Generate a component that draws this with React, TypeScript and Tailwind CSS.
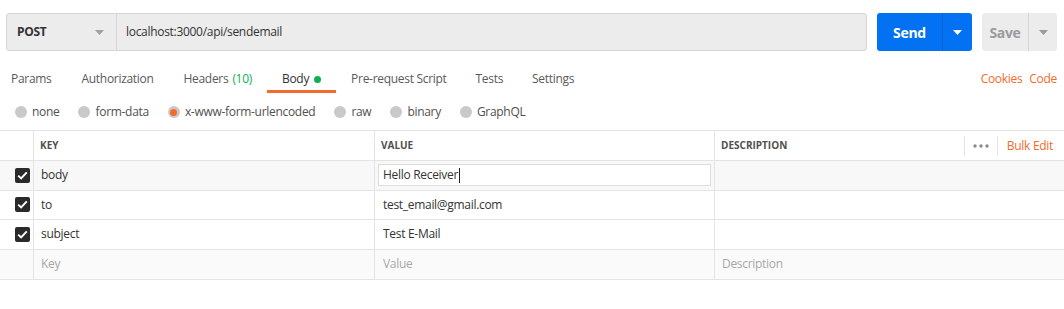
const font = { fontFamily: '"Open Sans", "Liberation Sans", sans-serif' };

const Caret = ({ color }: { color: string }) => (
  <svg width="9" height="5" viewBox="0 0 9 5">
    <path d="M0 0 L9 0 L4.5 5 Z" fill={color} />
  </svg>
);

const Check = () => (
  <div className="flex h-[15px] w-[15px] items-center justify-center rounded-[2px] bg-[#2a2a2a]">
    <svg width="11" height="9" viewBox="0 0 11 9">
      <path d="M1.2 4.6 L4.1 7.4 L9.8 1.4" stroke="white" strokeWidth="2" fill="none" />
    </svg>
  </div>
);

const Radio = ({ label, active }: { label: string; active?: boolean }) => (
  <div className="flex items-center gap-[5px]">
    <div className="flex h-[12px] w-[12px] items-center justify-center rounded-full bg-[#c9c9c9]">
      {active && <div className="h-[7px] w-[7px] rounded-full bg-[#f26b2c]"></div>}
    </div>
    <span className="text-[12px] text-[#505050]">{label}</span>
  </div>
);

const rows = [
  { key: 'body', value: 'Hello Receiver', editing: true },
  { key: 'to', value: 'test_email@gmail.com' },
  { key: 'subject', value: 'Test E-Mail' },
];

const App = () => {
  return (
    <div className="h-[309px] w-[1064px] overflow-hidden bg-white tracking-[-0.3px]" style={font}>
      {/* Barra de petición */}
      <div className="flex items-center gap-[10px] pt-[13px] pr-[7px] pl-[6px]">
        <div className="flex h-[38px] flex-1 rounded-[3px] border border-[#d6d6d6] bg-[#ececec]">
          <div className="flex w-[110px] items-center justify-between border-r border-[#d6d6d6] pr-[12px] pl-[10px]">
            <span className="text-[12px] font-bold text-[#333]">POST</span>
            <Caret color="#a0a0a0" />
          </div>
          <div className="flex items-center pl-[9px] text-[12px] text-[#333]">localhost:3000/api/sendemail</div>
        </div>
        <div className="flex h-[38px] w-[95px] rounded-[3px] bg-[#0271f2]">
          <div className="flex w-[66px] items-center justify-center border-r border-[#0a5fc9] text-[14px] font-bold text-white">
            Send
          </div>
          <div className="flex flex-1 items-center justify-center">
            <Caret color="#ffffff" />
          </div>
        </div>
        <div className="flex h-[38px] w-[75px] rounded-[3px] bg-[#ececec]">
          <div className="flex w-[47px] items-center justify-center border-r border-[#d6d6d6] text-[14px] font-bold text-[#9a9a9a]">
            Save
          </div>
          <div className="flex flex-1 items-center justify-center">
            <Caret color="#9a9a9a" />
          </div>
        </div>
      </div>

      {/* Pestañas */}
      <div className="mt-[14px] flex h-[28px] items-stretch justify-between pr-[7px]">
        <div className="ml-[-4px] flex text-[12px] text-[#5a5a5a]">
          <div className="flex items-center px-[15px]">Params</div>
          <div className="flex items-center px-[15px]">Authorization</div>
          <div className="flex items-center px-[15px]">
            Headers <span className="ml-[4px] text-[#0cb050]">(10)</span>
          </div>
          <div className="flex items-center gap-[5px] border-b-[3px] border-[#f26b2c] px-[15px] pt-[3px] text-[#333]">
            Body <span className="h-[7px] w-[7px] rounded-full bg-[#0cb050]"></span>
          </div>
          <div className="flex items-center px-[15px]">Pre-request Script</div>
          <div className="flex items-center px-[14px]">Tests</div>
          <div className="flex items-center px-[15px]">Settings</div>
        </div>
        <div className="flex items-center gap-[7px] text-[12px] text-[#f26b2c]">
          <span>Cookies</span>
          <span>Code</span>
        </div>
      </div>

      {/* Tipo de cuerpo */}
      <div className="mt-[8px] flex h-[22px] items-center gap-[19px] pl-[15px]">
        <Radio label="none" />
        <Radio label="form-data" />
        <Radio label="x-www-form-urlencoded" active />
        <Radio label="raw" />
        <Radio label="binary" />
        <Radio label="GraphQL" />
      </div>

      {/* Tabla */}
      <div className="mt-[7px] border-t border-[#e4e4e4] text-[12px]">
        <div className="flex h-[30px] border-b border-[#e4e4e4] text-[10px] font-bold tracking-normal text-[#505050]">
          <div className="w-[34px] border-r border-[#e4e4e4]"></div>
          <div className="flex w-[341px] items-center border-r border-[#e4e4e4] pl-[6px]">KEY</div>
          <div className="flex w-[340px] items-center border-r border-[#e4e4e4] pl-[6px]">VALUE</div>
          <div className="flex flex-1 items-center pl-[6px]">
            <span className="flex-1">DESCRIPTION</span>
            <div className="flex h-[20px] items-center border-x border-[#e4e4e4] px-[8px] text-[#8a8a8a]">
              <svg width="16" height="4" viewBox="0 0 16 4">
                <circle cx="2" cy="2" r="1.7" fill="#8a8a8a" />
                <circle cx="8" cy="2" r="1.7" fill="#8a8a8a" />
                <circle cx="14" cy="2" r="1.7" fill="#8a8a8a" />
              </svg>
            </div>
            <span className="pr-[11px] pl-[9px] text-[12px] font-normal tracking-[-0.3px] text-[#f26b2c]">Bulk Edit</span>
          </div>
        </div>
        {rows.map((r) => (
          <div
            key={r.key}
            className={`flex h-[29.5px] border-b border-[#e4e4e4] text-[#333] ${r.editing ? 'bg-[#f8f8f8]' : 'bg-white'}`}
          >
            <div className="flex w-[34px] items-center border-r border-[#e4e4e4] pl-[15px]">
              <Check />
            </div>
            <div className="flex w-[341px] items-center border-r border-[#e4e4e4] pl-[7px]">{r.key}</div>
            <div className="flex w-[340px] items-center border-r border-[#e4e4e4] px-[3px]">
              {r.editing ? (
                <div className="flex h-[22px] w-full items-center border border-[#dcdcdc] bg-white pl-[4px]">
                  {r.value}
                  <span className="ml-[1px] h-[15px] w-[1px] bg-[#222]"></span>
                </div>
              ) : (
                <span className="pl-[5px]">{r.value}</span>
              )}
            </div>
            <div className="flex-1"></div>
          </div>
        ))}
        <div className="flex h-[30px] border-b border-[#e4e4e4] bg-[#fafafa] text-[#a8a8a8]">
          <div className="w-[34px] border-r border-[#e4e4e4]"></div>
          <div className="flex w-[341px] items-center border-r border-[#e4e4e4] pl-[7px]">Key</div>
          <div className="flex w-[340px] items-center border-r border-[#e4e4e4] pl-[8px]">Value</div>
          <div className="flex flex-1 items-center pl-[7px]">Description</div>
        </div>
      </div>
    </div>
  );
};

export default App;
